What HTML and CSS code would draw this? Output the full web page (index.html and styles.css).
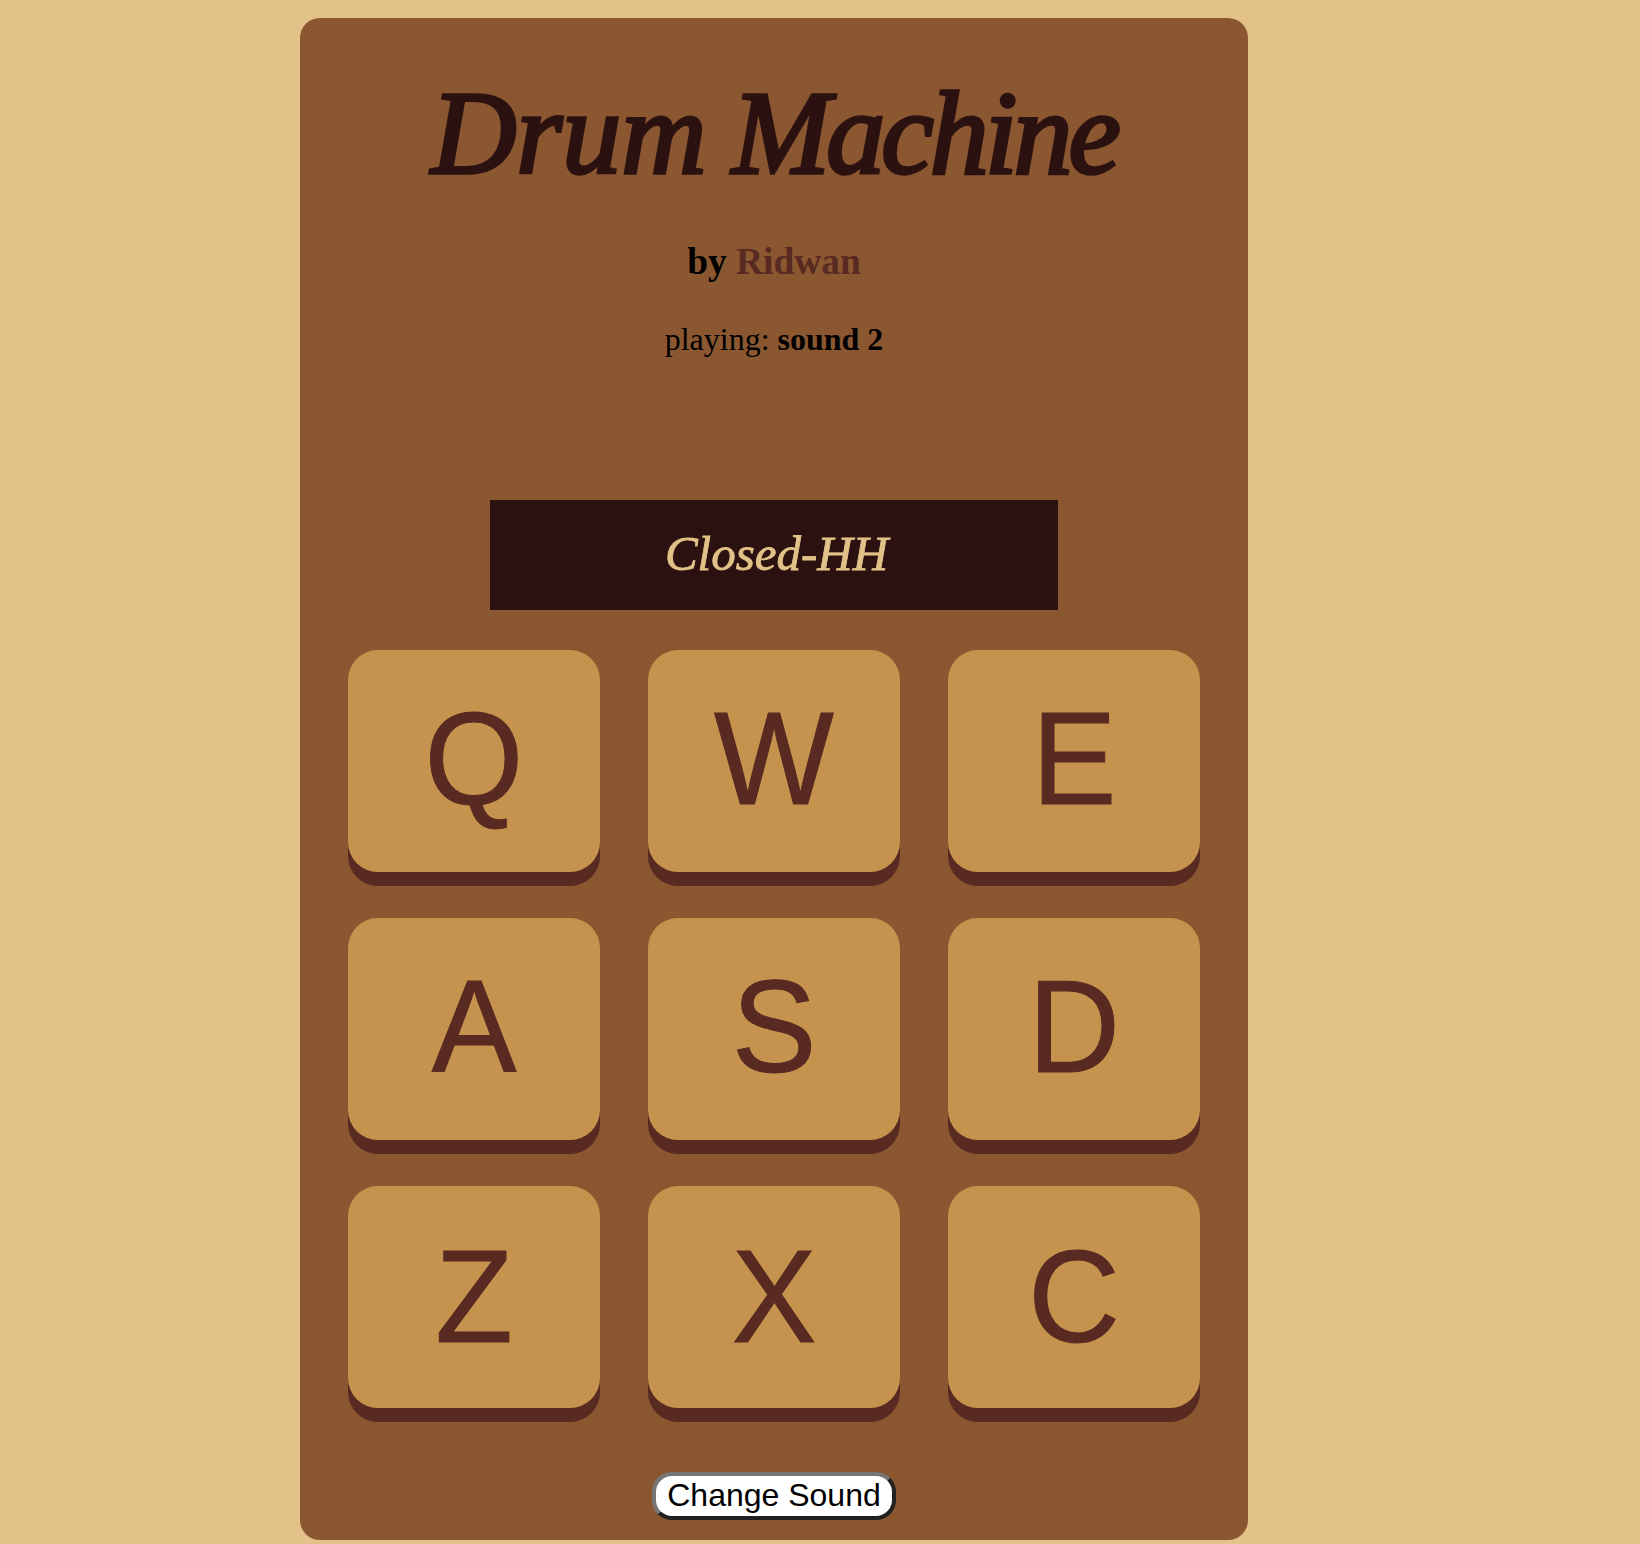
FILE: index.html
```html
<!DOCTYPE html>
<html lang="en">
<head>
<meta charset="utf-8">
<title>Drum Machine</title>
<link rel="stylesheet" href="styles.css">
</head>
<body>
<main class="machine">
  <h1 class="title"><span class="drum">Drum</span> Machine</h1>
  <h3 class="author">by <span class="name">Ridwan</span></h3>
  <p class="playing">playing: <b>sound 2</b></p>
  <div class="display">Closed-HH</div>
  <div class="pads">
    <button class="pad"><span class="letter">Q</span></button>
    <button class="pad"><span class="letter">W</span></button>
    <button class="pad"><span class="letter">E</span></button>
    <button class="pad"><span class="letter">A</span></button>
    <button class="pad"><span class="letter">S</span></button>
    <button class="pad"><span class="letter">D</span></button>
    <button class="pad"><span class="letter low">Z</span></button>
    <button class="pad"><span class="letter low">X</span></button>
    <button class="pad"><span class="letter low">C</span></button>
  </div>
  <button class="change">Change Sound</button>
</main>
</body>
</html>
```
FILE: styles.css
```css
* {
  box-sizing: border-box;
}

body {
  margin: 0;
  height: 1544px;
  padding: 18px 0 0 300px;
  overflow: hidden;
  background: #e2c288;
  font-family: "Liberation Serif", serif;
  color: #000;
}

.machine {
  display: flex;
  flex-direction: column;
  align-items: center;
  width: 948px;
  height: 1522px;
  padding-top: 46px;
  border-radius: 20px;
  background: #8b5730;
}

.title {
  margin: 0;
  height: 140px;
  line-height: 140px;
  font-family: "Apple Chancery", "Liberation Serif", serif;
  font-size: 118px;
  font-style: italic;
  font-weight: 400;
  letter-spacing: -4px;
  white-space: nowrap;
  color: #2c1111;
  -webkit-text-stroke: 3.5px #2c1111;
}

.drum {
  letter-spacing: 0;
}

.author {
  margin: 37px 0 0;
  line-height: 42px;
  font-size: 37.44px;
}

.name {
  color: #582a21;
}

.playing {
  margin: 38px 0 0;
  line-height: 36px;
  font-size: 32px;
}

.display {
  width: 568px;
  height: 110px;
  margin-top: 143px;
  padding-left: 5px;
  background: #2c1111;
  color: #e2c288;
  font-family: "Apple Chancery", "Liberation Serif", serif;
  font-size: 49px;
  font-style: italic;
  line-height: 108px;
  text-align: center;
  -webkit-text-stroke: 0.8px #e2c288;
}

.pads {
  display: grid;
  grid-template-columns: repeat(3, 252px);
  grid-auto-rows: 222px;
  gap: 46px 48px;
  margin-top: 40px;
}

.pad {
  padding: 0;
  border: 0;
  border-radius: 30px;
  background: #c6934e;
  box-shadow: 0 14px 0 #582a21;
  color: #582a21;
  font-family: "Liberation Sans", Arial, sans-serif;
  font-size: 127px;
  line-height: 218px;
  padding-bottom: 4px;
}

.letter {
  display: block;
  transform: scaleY(1.03);
  -webkit-text-stroke: 1px #582a21;
}

.low {
  padding-top: 2px;
}

.change {
  width: 244px;
  height: 48px;
  margin-top: 64px;
  padding: 0 0 2px;
  border: 4px solid;
  border-color: #767676 #212121 #212121 #767676;
  border-radius: 20px;
  background: #fff;
  color: #000;
  font-family: "Liberation Sans", Arial, sans-serif;
  font-size: 32px;
  line-height: 38px;
  white-space: nowrap;
}
```
